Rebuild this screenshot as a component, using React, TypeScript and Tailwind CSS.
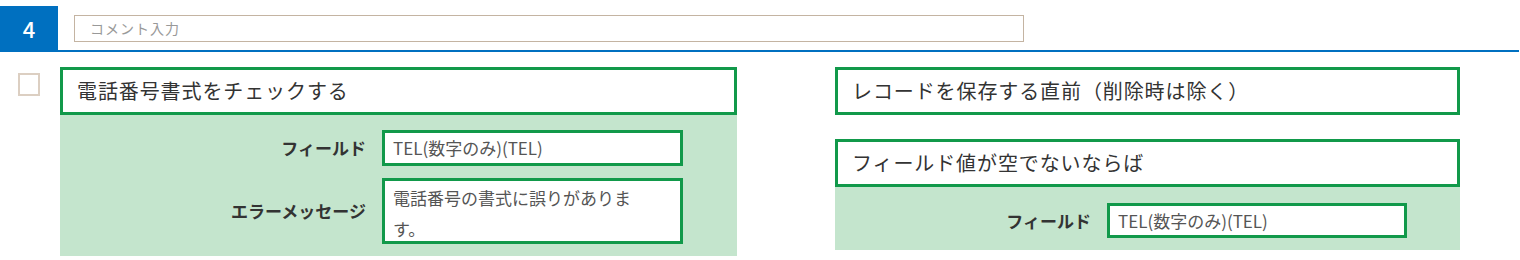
import React from 'react';

const font = { fontFamily: '"Noto Sans CJK JP", "Noto Sans", sans-serif' };

const TitleBox: React.FC<{ text: string }> = ({ text }) => (
  <div className="h-[48px] border-[3px] border-[#11994a] bg-white flex items-center pl-[14px] text-[20px] tracking-[0.9px] text-[#333]">
    {text}
  </div>
);

const FieldRow: React.FC<{ label: string; labelWidth: string; children: React.ReactNode }> = ({ label, labelWidth, children }) => (
  <div className="flex items-center">
    <div className={`${labelWidth} shrink-0 text-right pr-[16px] text-[17px] font-bold text-[#333]`}>{label}</div>
    {children}
  </div>
);

const App: React.FC = () => {
  return (
    <div className="w-[1520px] h-[260px] bg-white overflow-hidden" style={font}>
      {/* header */}
      <div className="pt-[6px] border-b-2 border-[#0070c0] w-[1519px]">
        <div className="flex items-start">
          <div className="w-[58px] h-[44px] bg-[#0070c0] text-white text-[22px] font-medium flex items-center justify-center">
            4
          </div>
          <div className="ml-[16px] mt-[9px] w-[950px] h-[27px] border border-[#c4b4a2] flex items-center pl-[15px] text-[14px] tracking-[1px] text-[#999]">
            コメント入力
          </div>
        </div>
      </div>

      {/* body */}
      <div className="flex items-start pt-[15px]">
        <div className="ml-[18px] mt-[6px] w-[22px] h-[23px] border-2 border-[#dccfc2] bg-white" />

        {/* left card */}
        <div className="ml-[20px] w-[677px]">
          <TitleBox text="電話番号書式をチェックする" />
          <div className="bg-[#c4e5cd] pt-[15px] pb-[12px] flex flex-col gap-[12px]">
            <FieldRow label="フィールド" labelWidth="w-[322px]">
              <div className="w-[301px] h-[36px] border-[3px] border-[#11994a] bg-white flex items-center pl-[8px] text-[17px] text-[#555]">
                TEL(数字のみ)(TEL)
              </div>
            </FieldRow>
            <FieldRow label="エラーメッセージ" labelWidth="w-[322px]">
              <div className="w-[301px] h-[66px] border-[3px] border-[#11994a] bg-white pl-[8px] pt-[1px] text-[17px] leading-[31px] text-[#555]">
                <div className="w-[260px]">電話番号の書式に誤りがあります。</div>
              </div>
            </FieldRow>
          </div>
        </div>

        {/* right card */}
        <div className="ml-[98px] w-[625px]">
          <TitleBox text="レコードを保存する直前（削除時は除く）" />
          <div className="h-[24px]" />
          <TitleBox text="フィールド値が空でないならば" />
          <div className="bg-[#c4e5cd] pt-[16px] pb-[12px]">
            <FieldRow label="フィールド" labelWidth="w-[272px]">
              <div className="w-[300px] h-[35px] border-[3px] border-[#11994a] bg-white flex items-center pl-[8px] text-[17px] text-[#555]">
                TEL(数字のみ)(TEL)
              </div>
            </FieldRow>
          </div>
        </div>
      </div>
    </div>
  );
};

export default App;
